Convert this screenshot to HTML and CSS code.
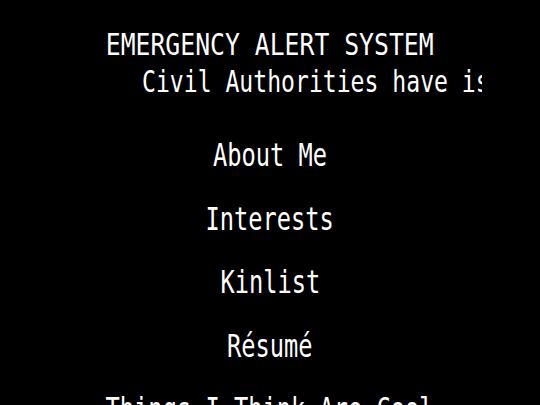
FILE: index.html
```html
<!DOCTYPE html>
<html lang="en">
<head>
<meta charset="utf-8">
<title>Emergency Alert System</title>
<link rel="stylesheet" href="styles.css">
</head>
<body>
<header class="alert">
  <div class="alert-title"><span class="squeeze">EMERGENCY ALERT SYSTEM</span></div>
  <div class="ticker"><span class="ticker-text">Civil Authorities have issued an emergency action notification</span></div>
</header>
<nav class="menu">
  <a class="menu-item" href="#about"><span class="squeeze">About Me</span></a>
  <a class="menu-item" href="#interests"><span class="squeeze">Interests</span></a>
  <a class="menu-item" href="#kinlist"><span class="squeeze">Kinlist</span></a>
  <a class="menu-item" href="#resume"><span class="squeeze">Résumé</span></a>
  <a class="menu-item" href="#cool"><span class="squeeze">Things I Think Are Cool</span></a>
</nav>
</body>
</html>
```
FILE: styles.css
```css
html, body {
  margin: 0;
  padding: 0;
  background: #000;
  color: #fff;
  font-family: "DejaVu Sans Mono", "Liberation Mono", monospace;
  overflow: hidden;
}

.alert {
  padding-top: 26px;
  display: flex;
  flex-direction: column;
}

.alert-title {
  font-size: 30px;
  line-height: 37px;
  text-align: center;
  white-space: nowrap;
}

.alert-title .squeeze {
  display: inline-block;
  transform: scaleX(0.825);
  transform-origin: center;
}

.ticker {
  width: 423px;
  margin: 0 auto;
  overflow: hidden;
  white-space: nowrap;
  font-size: 30px;
  line-height: 37px;
}

.ticker-text {
  display: inline-block;
  margin-left: 83px;
  transform: scaleX(0.77);
  transform-origin: left center;
}

.menu {
  margin-top: 24px;
  display: flex;
  flex-direction: column;
  align-items: center;
}

.menu-item {
  color: #fff;
  text-decoration: none;
  font-size: 32px;
  line-height: 63.5px;
  white-space: nowrap;
  text-align: center;
}

.menu-item .squeeze {
  display: inline-block;
  transform: scaleX(0.74);
  transform-origin: center;
}
```
